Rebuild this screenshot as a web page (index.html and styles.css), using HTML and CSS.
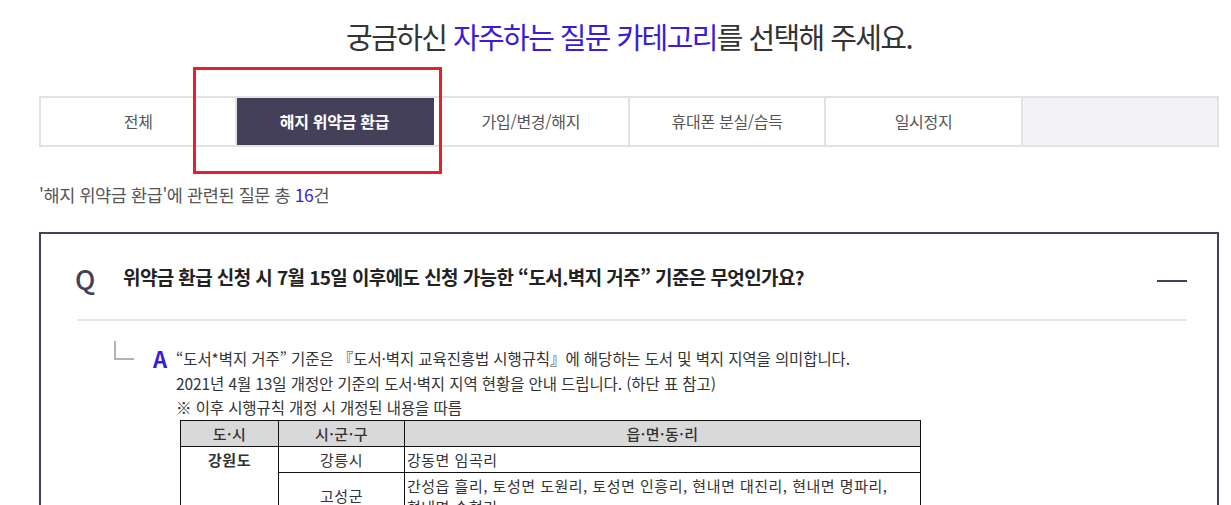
FILE: index.html
```html
<!DOCTYPE html>
<html lang="ko">
<head>
    <meta charset="UTF-8">
    <title>자주하는 질문</title>
    <link rel="stylesheet" href="styles.css">
</head>
<body>
    <div class="container">
        <h1 class="title">궁금하신 <span class="point">자주하는 질문 카테고리</span>를 선택해 주세요.</h1>

        <div class="tab-wrap">
            <ul class="tabs">
                <li>전체</li>
                <li class="on">해지 위약금 환급</li>
                <li>가입/변경/해지</li>
                <li>휴대폰 분실/습득</li>
                <li>일시정지</li>
                <li class="empty"></li>
            </ul>
            <div class="mark"></div>
        </div>

        <p class="count">'해지 위약금 환급'에 관련된 질문 총 <span class="point">16</span>건</p>

        <div class="faq">
            <div class="faq-q">
                <span class="q">Q</span>
                <strong class="q-text">위약금 환급 신청 시 7월 15일 이후에도 신청 가능한 “도서.벽지 거주” 기준은 무엇인가요?</strong>
                <span class="toggle"></span>
            </div>
            <div class="faq-a">
                <span class="corner"></span>
                <span class="a">A</span>
                <div class="a-body">
                    <p>“도서*벽지 거주” 기준은 『도서·벽지 교육진흥법 시행규칙』에 해당하는 도서 및 벽지 지역을 의미합니다.</p>
                    <p>2021년 4월 13일 개정안 기준의 도서·벽지 지역 현황을 안내 드립니다. (하단 표 참고)</p>
                    <p>※ 이후 시행규칙 개정 시 개정된 내용을 따름</p>
                    <table class="area">
                        <colgroup>
                            <col class="c1">
                            <col class="c2">
                            <col>
                        </colgroup>
                        <thead>
                            <tr><th>도·시</th><th>시·군·구</th><th>읍·면·동·리</th></tr>
                        </thead>
                        <tbody>
                            <tr>
                                <td class="city" rowspan="2"><b>강원도</b></td>
                                <td class="center">강릉시</td>
                                <td>강동면 임곡리</td>
                            </tr>
                            <tr>
                                <td class="center">고성군</td>
                                <td>간성읍 흘리, 토성면 도원리, 토성면 인흥리, 현내면 대진리, 현내면 명파리,<br>현내면 송현리</td>
                            </tr>
                        </tbody>
                    </table>
                </div>
            </div>
        </div>
    </div>
</body>
</html>
```

FILE: styles.css
```css
* {
    box-sizing: border-box;
}
body {
    margin: 0;
    font-family: "Noto Sans CJK KR", "Noto Sans", sans-serif;
    color: #333;
    background-color: #fff;
    overflow: hidden;
}
.container {
    width: 1180px;
    margin-left: 39px;
}
.point {
    color: #3b1bd6;
}
.title {
    margin: 0;
    padding-top: 14px;
    height: 96px;
    text-align: center;
    font-size: 29px;
    font-weight: 400;
    letter-spacing: -1.6px;
    line-height: 44px;
    color: #333;
}
.tab-wrap {
    position: relative;
}
.tabs {
    display: flex;
    margin: 0;
    padding: 0;
    list-style: none;
    border-top: 2px solid #e2e2e2;
    border-bottom: 2px solid #e2e2e2;
    border-left: 2px solid #e2e2e2;
}
.tabs li {
    flex: 1;
    height: 47px;
    line-height: 47px;
    text-align: center;
    font-size: 16px;
    letter-spacing: -0.3px;
    color: #555;
    border-right: 2px solid #e2e2e2;
}
.tabs li.on {
    background-color: #45405a;
    color: #fff;
    font-weight: 700;
    border-right-color: #45405a;
}
.tabs li.empty {
    background-color: #f3f3f5;
}
.mark {
    position: absolute;
    left: 154px;
    top: -29px;
    width: 249px;
    height: 107px;
    border: 3px solid #e5202a;
}
.count {
    margin: 0;
    padding-top: 35px;
    height: 85px;
    font-size: 17.5px;
    letter-spacing: -0.4px;
    color: #555;
}
.faq {
    border: 2px solid #45405a;
    border-bottom: none;
    padding: 0 30px 0 43px;
    height: 280px;
}
.faq-q {
    display: flex;
    align-items: center;
    height: 87px;
    border-bottom: 2px solid #e6e6e6;
    margin-left: -7px;
    padding-left: 0;
}
.faq-q .q {
    width: 46px;
    font-size: 27px;
    font-weight: 500;
    color: #45405a;
    padding-top: 4px;
    margin-left: -2px;
    margin-right: 2px;
}
.faq-q .q-text {
    flex: 1;
    font-size: 19px;
    font-weight: 700;
    letter-spacing: -0.6px;
    color: #222;
}
.faq-q .toggle {
    width: 30px;
    height: 2px;
    background-color: #45405a;
    margin-top: 8px;
}
.faq-a {
    display: flex;
    padding-top: 20px;
    padding-left: 30px;
}
.corner {
    width: 20px;
    height: 19px;
    border-left: 2px solid #b3b3b3;
    border-bottom: 2px solid #b3b3b3;
}
.a {
    margin-left: 19px;
    width: 23px;
    font-size: 22px;
    font-weight: 700;
    line-height: 26px;
    margin-top: 4px;
    color: #3b1bd6;
}
.a-body {
    padding-top: 5px;
}
.a-body p {
    margin: 0;
    font-size: 15.5px;
    line-height: 24.5px;
    letter-spacing: -0.1px;
    color: #333;
}
.area {
    margin: 0 0 0 4px;
    width: 741px;
    border-collapse: collapse;
    font-size: 15px;
    letter-spacing: 0.5px;
    color: #333;
}
.area .c1 {
    width: 98px;
}
.area .c2 {
    width: 126px;
}
.area th,
.area td {
    border: 1px solid #111;
    padding: 2px 2px;
    height: 26px;
    line-height: 21px;
    font-weight: 400;
}
.area th {
    background-color: #d9d9d9;
    font-weight: 500;
    padding: 0 2px;
}
.area td.city {
    text-align: center;
    vertical-align: top;
}
.area td.center {
    text-align: center;
}
```
